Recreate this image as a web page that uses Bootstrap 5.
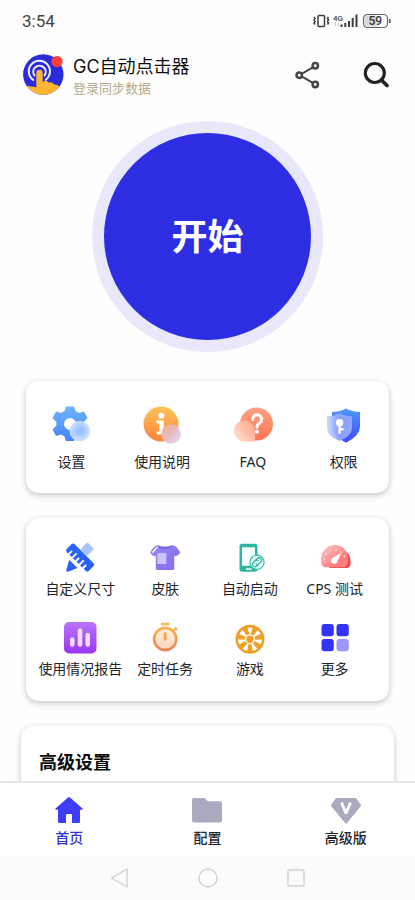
<!DOCTYPE html>
<html lang="zh-CN">
<head>
<meta charset="utf-8">
<meta name="viewport" content="width=device-width, initial-scale=1">
<title>GC自动点击器</title>
<link href="https://cdn.jsdelivr.net/npm/bootstrap@5.3.0/dist/css/bootstrap.min.css" rel="stylesheet">
<style>
body { font-family: "Noto Sans", "Noto Sans CJK SC", sans-serif; font-size: 14px; line-height: 20px; color: #22242c; background: #fefefe; }
svg { display: block; flex: none; }
.status-bar { height: 42px; padding: 0 24px 0 22px; color: #444; }
.clock { font-family: Roboto, sans-serif; font-size: 17px; }
.app-head { padding: 12px 25px 0 23px; height: 56px; }
.app-name { font-family: Inter, "Noto Sans CJK SC", sans-serif; font-size: 18px; line-height: 26px; color: #111; }
.login-link { font-size: 13px; line-height: 16px; color: #b3aa88; }
.head-names { padding-left: 9px; }
.head-tools { gap: 41px; height: 41px; }
.plain { background: none; border: 0; padding: 0; color: inherit; }
.content { min-height: 0; overflow-y: auto; scrollbar-width: none; padding: 23px 26px 0; }
.content::-webkit-scrollbar { display: none; }
.start-btn { width: 231px; height: 231px; border: 12px solid #e9e8fb; background: #2d2de2; color: #fff; font-size: 36px; font-weight: 700; line-height: 48px; }
.panel { background: #fff; border: 0; border-radius: 13px; box-shadow: 0 2px 6px rgba(0,0,0,.24); }
.panel-main { margin-top: 29px; padding: 23px 0 21px; }
.panel-more { margin-top: 25px; padding: 21px 12px 22px; row-gap: 20px; }
.panel-adv { margin: 25px -5px 24px; padding: 24px 18px 48px; }
.adv-title { font-size: 18px; line-height: 24px; font-weight: 700; color: #0c0c0c; }
.tile { color: #22242c; text-decoration: none; white-space: nowrap; }
.tabs { height: 74px; border-top: 2px solid #e6e6e6; background: #fff; padding-top: 13px; }
.tab-item { color: #22242c; text-decoration: none; font-weight: 500; }
.tab-item.active { color: #3330d8; }
.sys-nav { height: 45px; background: #fbfbfb; }
.sys-nav button { width: 88px; }
</style>
<script src="https://cdn.jsdelivr.net/npm/bootstrap@5.3.0/dist/js/bootstrap.bundle.min.js"></script>
</head>
<body class="d-flex flex-column vh-100 overflow-hidden">

<div class="status-bar d-flex align-items-center justify-content-between flex-shrink-0">
  <span class="clock">3:54</span>
  <svg width="79" height="18" viewBox="0 0 79 18" role="img" aria-label="振动 4G 电量 59">
    <g fill="none" stroke="#3d3d3d" stroke-width="1.5">
      <rect x="6" y="3.500" width="6.500" height="11" rx="1"/>
      <path d="M2 5l1 1.500-1 1.500 1 1.500-1 1.500 1 1.500M16.500 5l-1 1.500 1 1.500-1 1.500 1 1.500-1 1.500"/>
    </g>
    <text x="21" y="8.500" font-family="Roboto, sans-serif" font-size="8" font-weight="500" fill="#444">4G</text>
    <path d="M23.500 14v-3.500l-1 1M26 10.500V14l1-1" stroke="#bbb" stroke-width=".8" fill="none"/>
    <path d="M29.500 15v-2.500M33.300 15v-4M37 15V9M40.700 15V6M44.500 15V2.500" stroke="#3d3d3d" stroke-width="2"/>
    <rect x="51.500" y="2.500" width="24" height="13" rx="4" fill="#fff" stroke="#666" stroke-width="1.200"/>
    <path d="M55.500 3.500H65v11h-9.500a3 3 0 0 1-3-3v-5a3 3 0 0 1 3-3z" fill="#d8d8d8"/>
    <path d="M77.800 7v4" stroke="#555" stroke-width="1.600"/>
    <text x="63.300" y="13.300" text-anchor="middle" font-family="Roboto, sans-serif" font-size="12" font-weight="500" fill="#333">59</text>
  </svg>
</div>

<header class="app-head d-flex justify-content-between flex-shrink-0">
  <div class="d-flex">
    <svg width="41" height="41" viewBox="0 0 41 41" aria-hidden="true">
      <defs><clipPath id="logoClip"><circle cx="20.300" cy="20.500" r="20.200"/></clipPath></defs>
      <circle cx="20.300" cy="20.500" r="20.200" fill="#2b2bdc"/>
      <g fill="none" stroke="#f2f2ff" stroke-width="2" stroke-linecap="round">
        <path d="M10.300 26a10.600 10.600 0 1 1 12.400-.2"/>
        <path d="M11.500 21.500a6.200 6.200 0 1 1 10 0"/>
      </g>
      <path clip-path="url(#logoClip)" fill="#fdb532" d="M0 33q4-2 7-.500 4-.500 6.300 1V19a3.200 3.200 0 0 1 6.400 0V28q3.600-2.500 6 .500 3.500-1 5.500 2 3-.500 4.500 1.500l6 .500V41H0z"/>
      <circle cx="34" cy="7.500" r="5.600" fill="#ff3f38"/>
    </svg>
    <div class="head-names d-flex flex-column align-items-start">
      <span class="app-name">GC自动点击器</span>
      <a href="#" class="login-link text-decoration-none">登录同步数据</a>
    </div>
  </div>
  <div class="head-tools d-flex align-items-center">
    <button type="button" class="plain" aria-label="分享">
      <svg width="28" height="28" viewBox="0 0 28 28" fill="none" stroke="#454548">
        <path d="M6.500 14.200L22 5.200M6.500 14.200L22 23.200" stroke-width="2"/>
        <g fill="#fff" stroke-width="2.500"><circle cx="22.300" cy="4.800" r="2.700"/><circle cx="22.300" cy="23.500" r="2.700"/><circle cx="6.200" cy="14.200" r="2.700"/></g>
      </svg>
    </button>
    <button type="button" class="plain" aria-label="搜索">
      <svg width="28" height="28" viewBox="0 0 28 28" fill="none" stroke="#222" stroke-linecap="round">
        <circle cx="12.800" cy="12" r="9.500" stroke-width="3.200"/><path d="M19.800 19.500l5.200 5" stroke-width="3.800"/>
      </svg>
    </button>
  </div>
</header>

<main class="content flex-grow-1">
  <button type="button" class="start-btn rounded-circle d-block mx-auto p-0">开始</button>

  <section class="panel panel-main row row-cols-4 gx-0 mx-0">
    <a href="#" class="tile col d-flex flex-column align-items-center gap-2">
      <svg width="40" height="40" viewBox="0 0 40 40" aria-hidden="true">
        <defs>
          <linearGradient id="gearG" x1="0" y1="0" x2="0" y2="1"><stop offset="0" stop-color="#70b4ff"/><stop offset="1" stop-color="#4283f5"/></linearGradient>
          <radialGradient id="gearB"><stop offset="0" stop-color="#92c2ff"/><stop offset="1" stop-color="#c9deff"/></radialGradient>
        </defs>
        <path fill="url(#gearG)" fill-rule="evenodd" d="M15 2.500h8l1.500 4.500 3.300 2 5.400-1.500 3.300 6.500-3.700 4v3.500l3.700 4-3.500 6.500-5.200-1.500-3.300 2-1.500 4.500h-8l-1.500-4.500-3.300-2L5 32 1.500 25.500l3.900-4V18l-3.900-4L5 7.500l5.200 1.500 3.300-2zM19 14a6 6 0 1 0 0 12 6 6 0 0 0 0-12z"/>
        <circle cx="28.800" cy="27" r="10.300" fill="url(#gearB)" opacity=".93"/>
      </svg>
      <span>设置</span>
    </a>
    <a href="#" class="tile col d-flex flex-column align-items-center gap-2">
      <svg width="40" height="40" viewBox="0 0 40 40" aria-hidden="true">
        <defs>
          <linearGradient id="infoG" x1="0" y1="0" x2="0" y2="1"><stop offset="0" stop-color="#ffc458"/><stop offset="1" stop-color="#fb823c"/></linearGradient>
          <linearGradient id="infoB" x1="0" y1="0" x2="1" y2="1"><stop offset="0" stop-color="#f2aa91"/><stop offset="1" stop-color="#dcd3ff"/></linearGradient>
        </defs>
        <circle cx="19" cy="20" r="17.500" fill="url(#infoG)"/>
        <circle cx="19.300" cy="11.800" r="3" fill="#fff"/>
        <path fill="#fff" d="M14.500 16.500h7.300v11h2.400v3h-9.400v-3h2.500v-8.200h-2.800z"/>
        <circle cx="29" cy="30" r="9.800" fill="url(#infoB)" opacity=".94"/>
      </svg>
      <span>使用说明</span>
    </a>
    <a href="#" class="tile col d-flex flex-column align-items-center gap-2">
      <svg width="40" height="40" viewBox="0 0 40 40" aria-hidden="true">
        <defs>
          <linearGradient id="faqG" x1="0" y1="0" x2="0" y2="1"><stop offset="0" stop-color="#ffa184"/><stop offset="1" stop-color="#fd7650"/></linearGradient>
          <linearGradient id="faqB" x1="1" y1=".3" x2="0" y2="1"><stop offset="0" stop-color="#ffae92"/><stop offset="1" stop-color="#ffe0d4"/></linearGradient>
        </defs>
        <circle cx="23.500" cy="20" r="16.500" fill="url(#faqG)"/>
        <path d="M19.700 15.500a4.500 4.500 0 1 1 7 3.500q-2.500 1.500-2.700 4.300" fill="none" stroke="#fff" stroke-width="3" stroke-linecap="round"/>
        <circle cx="24" cy="27.800" r="2" fill="#fff"/>
        <path fill="url(#faqB)" opacity=".95" d="M11.500 16.500A10.500 10.500 0 0 1 22 27v10.700H11.500a10.600 10.600 0 0 1 0-21.200z"/>
      </svg>
      <span>FAQ</span>
    </a>
    <a href="#" class="tile col d-flex flex-column align-items-center gap-2">
      <svg width="40" height="40" viewBox="0 0 40 40" aria-hidden="true">
        <defs>
          <linearGradient id="shG" x1="0" y1="0" x2="0" y2="1"><stop offset="0" stop-color="#4f9af8"/><stop offset="1" stop-color="#3a49fb"/></linearGradient>
          <linearGradient id="shB" x1="0" y1="0" x2="1" y2="0"><stop offset="0" stop-color="#c5d3ff"/><stop offset=".5" stop-color="#8fa4ff"/><stop offset="1" stop-color="#9aadff"/></linearGradient>
        </defs>
        <path fill="url(#shG)" d="M22 4.500q6 3.200 14 3.500v14.500q0 9-14 16.300Q8 31.500 8 22.500V8q8-.3 14-3.500z"/>
        <path fill="url(#shB)" opacity=".92" d="M15.500 9Q20 12 28 12.500V24q0 8-12.500 13Q3 32 3 24V12.500Q10.500 12 15.500 9z"/>
        <circle cx="15.600" cy="18.800" r="3.700" fill="#fff"/>
        <path d="M15.600 20.800v9M16 25.300h3.500" stroke="#fff" stroke-width="2.400" fill="none"/>
      </svg>
      <span>权限</span>
    </a>
  </section>

  <section class="panel panel-more row row-cols-4 gx-0 mx-0">
    <a href="#" class="tile col d-flex flex-column align-items-center gap-1">
      <svg width="36" height="36" viewBox="0 0 36 36" aria-hidden="true">
        <rect x="20.500" y="5.200" width="9.500" height="10" rx="1.500" transform="rotate(45 25.300 10.200)" fill="#a8c3ff"/>
        <path d="M7.200 20.700L15.500 29 6 32.700Q4 33 4.300 31z" fill="#2a62f5"/>
        <g transform="rotate(45 18 18.700)">
          <rect x="2.500" y="13" width="31" height="11" rx="2" fill="#2a62f5"/>
          <path d="M7.500 24.500v-5M12.500 24.500V18M17.500 24.500v-5M22.500 24.500V18M27.500 24.500v-5" stroke="#fff" stroke-width="1.900"/>
        </g>
      </svg>
      <span>自定义尺寸</span>
    </a>
    <a href="#" class="tile col d-flex flex-column align-items-center gap-1">
      <svg width="36" height="36" viewBox="0 -1 36 36" aria-hidden="true">
        <defs><linearGradient id="teeG" x1="0" y1="0" x2="1" y2="1"><stop offset="0" stop-color="#938cf5"/><stop offset=".6" stop-color="#8f74ee"/><stop offset="1" stop-color="#7e70ed"/></linearGradient></defs>
        <path fill="url(#teeG)" d="M11 5q2.500 1.500 7 1.500T25 5q3 .500 5 2.500l3.300 5q-2 3.300-5 4L27.300 15v13.500q0 1.500-1.500 1.500H10.300q-1.500 0-1.500-1.500V15l-1 1.500q-3-1-4.800-4l3.500-5Q8.500 5.300 11 5z"/>
        <path d="M12 6.500q6 3.500 12 0" fill="none" stroke="#6c59d8" stroke-width="1.200"/>
        <path d="M6 12l4-4.500" stroke="#eeeaff" stroke-width="1.800" stroke-linecap="round"/>
        <rect x="10.300" y="13" width="9" height="11" rx="1" fill="#c9c4ff"/>
      </svg>
      <span>皮肤</span>
    </a>
    <a href="#" class="tile col d-flex flex-column align-items-center gap-1">
      <svg width="36" height="36" viewBox="0 -1 36 36" aria-hidden="true">
        <rect x="7.500" y="3.800" width="18" height="28" rx="2.500" fill="#2fb5a3"/>
        <rect x="10" y="7.300" width="13" height="18.500" fill="#f2fffc"/>
        <path d="M14 29h5.500" stroke="#fff" stroke-width="1.500"/>
        <circle cx="25" cy="22.300" r="7.100" fill="#e9fffa" stroke="#36b7a6" stroke-width="1.200"/>
        <g fill="none" stroke="#2fb5a3" stroke-width="1.300" transform="rotate(-45 25 22.300)">
          <path d="M24.500 24.800h-2.200a2.500 2.500 0 0 1 0-5h2.400a2.500 2.500 0 0 1 2.300 2.500"/>
          <path d="M25.500 19.800h2.200a2.500 2.500 0 0 1 0 5h-2.400a2.500 2.500 0 0 1-2.300-2.500"/>
        </g>
      </svg>
      <span>自动启动</span>
    </a>
    <a href="#" class="tile col d-flex flex-column align-items-center gap-1">
      <svg width="36" height="36" viewBox="0 -1 36 36" aria-hidden="true">
        <defs><linearGradient id="gaG" x1="0" y1="0" x2="1" y2="1"><stop offset="0" stop-color="#ffcaca"/><stop offset=".7" stop-color="#ff7d7e"/></linearGradient></defs>
        <path fill="#ee4d50" d="M12 28l12-19q9.700 3 9.700 13 0 6-4 6z"/>
        <path fill="url(#gaG)" d="M18 5a13 13 0 0 1 13 14q0 4.500-2 7-1 1.200-2.500 1.200H8q-2 0-3-2.200-1-2.500-1-6A14 14 0 0 1 18 5z"/>
        <path d="M7.500 20a10 10 0 0 1 20.500 0" fill="none" stroke="#ffe6e6" stroke-width="1.400" stroke-dasharray="1.500 4"/>
        <path fill="#fff" d="M24.500 12.500l-4 8.500a3.200 3.200 0 1 1-4-3.500z"/>
      </svg>
      <span>CPS 测试</span>
    </a>
    <a href="#" class="tile col d-flex flex-column align-items-center gap-1">
      <svg width="36" height="36" viewBox="0 -1 36 36" aria-hidden="true">
        <defs><linearGradient id="repG" x1="0" y1="0" x2="0" y2="1"><stop offset="0" stop-color="#b873fb"/><stop offset="1" stop-color="#9a36f2"/></linearGradient></defs>
        <rect x="2" y="2" width="32.500" height="31.500" rx="5" fill="url(#repG)"/>
        <path d="M10.300 19.500v5M18 10.500v14M25.700 15v9.500" stroke="#f3dcff" stroke-width="4.600" stroke-linecap="round"/>
      </svg>
      <span>使用情况报告</span>
    </a>
    <a href="#" class="tile col d-flex flex-column align-items-center gap-1">
      <svg width="36" height="36" viewBox="0 -1 36 36" aria-hidden="true">
        <defs>
          <linearGradient id="tmG" x1="0" y1="0" x2="0" y2="1"><stop offset="0" stop-color="#f5b350"/><stop offset="1" stop-color="#ef8050"/></linearGradient>
          <linearGradient id="tmB" x1="0" y1="0" x2="0" y2="1"><stop offset="0" stop-color="#fff0cf"/><stop offset="1" stop-color="#fdd3c3"/></linearGradient>
        </defs>
        <path d="M14 4h8.500" stroke="#f3bd5c" stroke-width="2.800"/>
        <path d="M26.500 10.500l2.500-2.200M28 7.300l2 2.500" stroke="#f3b050" stroke-width="2"/>
        <circle cx="18.200" cy="19" r="11.100" fill="url(#tmB)" stroke="url(#tmG)" stroke-width="2.600"/>
        <path d="M18.200 12.500v8" stroke="#f0a052" stroke-width="2.600"/>
      </svg>
      <span>定时任务</span>
    </a>
    <a href="#" class="tile col d-flex flex-column align-items-center gap-1">
      <svg width="36" height="36" viewBox="0 -1 36 36" aria-hidden="true">
        <circle cx="18" cy="19.300" r="13.200" fill="#fff" stroke="#eda02a" stroke-width="2.600"/>
        <g fill="#eda02a" transform="translate(18 19.300) rotate(26)">
          <path id="spoke" d="M-1.400-4L-3-13h6L1.400-4z"/>
          <use href="#spoke" transform="rotate(51.430)"/><use href="#spoke" transform="rotate(102.860)"/><use href="#spoke" transform="rotate(154.290)"/>
          <use href="#spoke" transform="rotate(205.710)"/><use href="#spoke" transform="rotate(257.140)"/><use href="#spoke" transform="rotate(308.570)"/>
        </g>
        <circle cx="18" cy="19.300" r="4.300" fill="#eda02a" stroke="#fff" stroke-width="1.200"/>
      </svg>
      <span>游戏</span>
    </a>
    <a href="#" class="tile col d-flex flex-column align-items-center gap-1">
      <svg width="36" height="36" viewBox="0 -1 36 36" fill="#3333f5" aria-hidden="true">
        <rect x="4.500" y="4" width="12.300" height="12.300" rx="3"/><rect x="19.500" y="4" width="12.300" height="12.300" rx="3"/>
        <rect x="4.500" y="19" width="12.300" height="12.300" rx="3"/><rect x="19.500" y="19" width="12.300" height="12.300" rx="3" fill="#9a99fa"/>
      </svg>
      <span>更多</span>
    </a>
  </section>

  <section class="panel panel-adv">
    <h2 class="adv-title mb-0">高级设置</h2>
  </section>
</main>

<nav class="tabs d-flex flex-shrink-0">
  <a href="#" class="tab-item active col d-flex flex-column align-items-center gap-1" aria-current="page">
    <svg width="32" height="28" viewBox="0 0 32 28" fill="#3d3dfa" aria-hidden="true"><path d="M16 1q.6 0 1 .4l12.500 11.200q.8 1.100-.5 1.200H27v11.700q0 1.500-1.500 1.500H19v-8q0-1-1-1h-4q-1 0-1 1v8H6.500Q5 27 5 25.500V13.800H3q-1.300-.1-.5-1.200L15 1.400q.4-.4 1-.4z"/></svg>
    <span>首页</span>
  </a>
  <a href="#" class="tab-item col d-flex flex-column align-items-center gap-1">
    <svg width="32" height="28" viewBox="0 0 32 28" fill="#a9a9bf" aria-hidden="true"><path d="M3 2h9.500q1.200 0 2 .8l2.300 2.400H29q2 0 2 2V24q0 2.500-2.500 2.500h-25Q1 26.500 1 24V4q0-2 2-2z"/></svg>
    <span>配置</span>
  </a>
  <a href="#" class="tab-item col d-flex flex-column align-items-center gap-1">
    <svg width="32" height="28" viewBox="0 0 32 28" aria-hidden="true"><path fill="#a9a9bf" d="M7 2h18q.8 0 1.300.6l4.400 6q.5.800 0 1.600L17 27q-1 1-2 0L1.300 10.200q-.5-.8 0-1.600l4.400-6Q6.200 2 7 2z"/><path d="M11.500 6.500L16 17.500l4.500-11" fill="none" stroke="#fff" stroke-width="2.800" stroke-linejoin="bevel"/></svg>
    <span>高级版</span>
  </a>
</nav>

<div class="sys-nav d-flex justify-content-center flex-shrink-0">
  <button type="button" class="plain d-flex justify-content-center align-items-center" aria-label="返回"><svg width="20" height="20" viewBox="0 0 20 20" fill="none" stroke="#cfcfcf" stroke-width="1.300" stroke-linejoin="round"><path d="M17 1v18L1.500 10z"/></svg></button>
  <button type="button" class="plain d-flex justify-content-center align-items-center" aria-label="主屏幕"><svg width="20" height="20" viewBox="0 0 20 20" fill="none" stroke="#cfcfcf" stroke-width="1.300"><circle cx="10" cy="10" r="9"/></svg></button>
  <button type="button" class="plain d-flex justify-content-center align-items-center" aria-label="最近任务"><svg width="20" height="20" viewBox="0 0 20 20" fill="none" stroke="#cfcfcf" stroke-width="1.300"><rect x="2" y="2" width="16" height="16" rx="1"/></svg></button>
</div>
</body>
</html>
